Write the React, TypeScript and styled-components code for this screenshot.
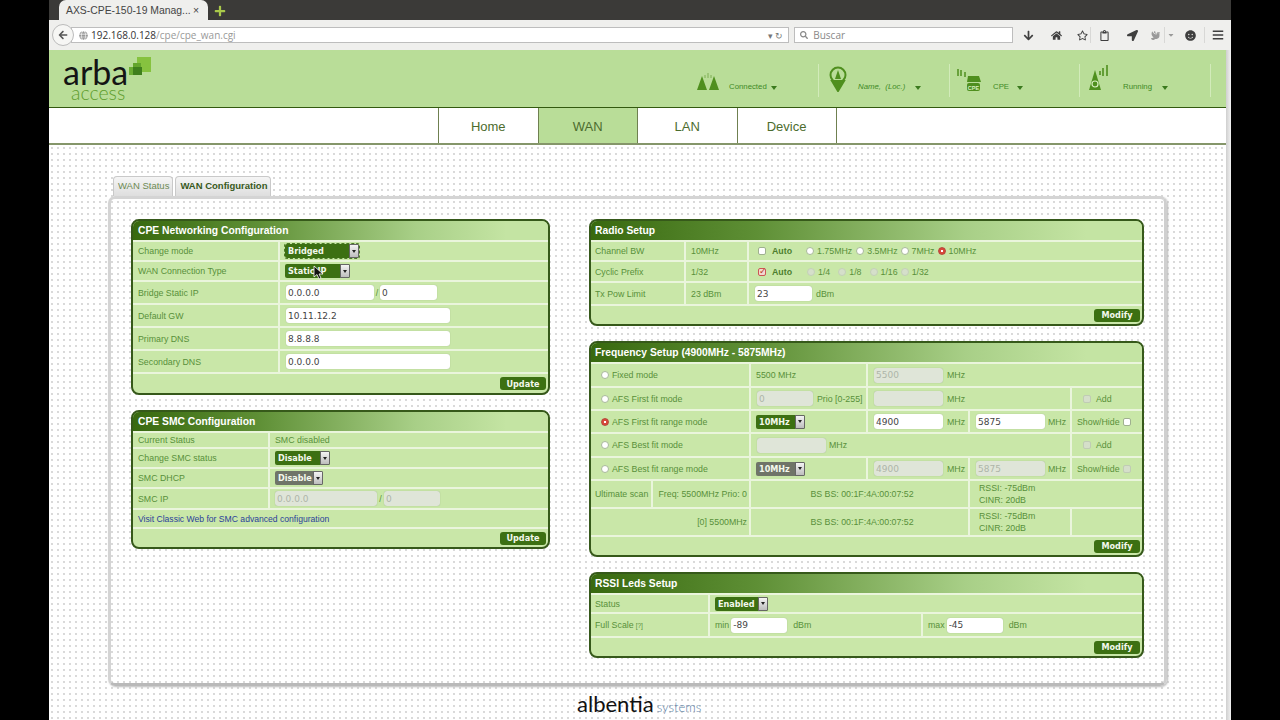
import React from 'react';
import styled, { createGlobalStyle } from 'styled-components';
import { FaArrowDown, FaHome, FaRegStar, FaRegClipboard, FaLocationArrow, FaBars, FaSmile, FaSearch, FaArrowLeft, FaGlobe, FaPlus, FaCaretDown, FaDove } from 'react-icons/fa';

const Global = createGlobalStyle`
  html, body { margin: 0; padding: 0; background: #000; overflow: hidden; }
  * { box-sizing: border-box; }
`;
const Page = styled.div`
  width: 1280px; height: 720px; padding: 0 49px; background: #000; overflow: hidden;
  font-family: "Liberation Sans", Arial, sans-serif;
`;
const Browser = styled.div`width: 1182px; height: 720px; display: flex; flex-direction: column; position: relative;`;
const TabStrip = styled.div`height: 20px; background: #3b3a38; display: flex; align-items: flex-end; padding-left: 10px; flex: none;`;
const BrowserTab = styled.div`
  width: 149px; height: 20px; background: #efefed; border-radius: 7px 7px 0 0; display: flex; align-items: center;
  padding: 0 9px 0 7px; justify-content: space-between; font: 10.4px "Liberation Sans", sans-serif; color: #444; white-space: nowrap;
`;
const Plus = styled.span`margin-left: 6px; height: 19px; display: flex; align-items: center; color: #a9c94a; font-size: 12px;`;
const Toolbar = styled.div`height: 30px; background: #efefed; display: flex; align-items: center; padding: 0 0 0 3px; flex: none; position: relative;`;
const BackBtn = styled.span`
  width: 22px; height: 22px; border-radius: 50%; background: #f6f6f4; border: 1px solid #bbb; color: #555; display: flex;
  align-items: center; justify-content: center; font-size: 10px; flex: none; position: relative; z-index: 1;
`;
const UrlBar = styled.div`
  width: 719px; height: 16px; margin-left: -3px; background: #fff; border: 1px solid #bdbdbd; display: flex; align-items: center;
  padding: 0 5px 0 7px; font: 10px "Open Sans", sans-serif; color: #999; gap: 3px;
`;
const UrlHost = styled.span`color: #333;`;
const UrlEnd = styled.span`margin-left: auto; color: #777; font-size: 9px;`;
const SearchBar = styled.div`
  width: 219px; height: 16px; margin-left: 5px; background: #fff; border: 1px solid #bdbdbd; display: flex; align-items: center;
  padding: 0 5px; gap: 5px; font: 10px "Open Sans", sans-serif; color: #888;
`;
const ToolIcons = styled.div`display: flex; align-items: center; margin-left: 5px; flex: 1; color: #3f3f3f; font-size: 11px;`;
const IconSlot = styled.span<{ $w: number; $sep?: boolean; $muted?: boolean; $size?: number }>`
  width: ${p => p.$w}px; height: 16px; display: flex; align-items: center; justify-content: center; flex: none;
  color: ${p => (p.$muted ? '#9a9a9a' : 'inherit')}; font-size: ${p => p.$size ?? 11}px;
  ${p => (p.$sep ? 'border-left: 1px solid #d8d8d6;' : '')}
`;

const View = styled.div`flex: 1; display: flex; min-height: 0;`;
const Main = styled.div`width: 1177px; display: flex; flex-direction: column; background: #fff;`;
const Scrollbar = styled.div`flex: 1; background: linear-gradient(to right, #cfcfcf, #f2f2f2);`;
const Header = styled.div`
  height: 58px; background: #b9dd98; border-bottom: 1px solid #33590f; display: flex; padding-left: 14px; flex: none;
`;
const Logo = styled.div`width: 90px; position: relative; padding-top: 7px;`;
const LogoArba = styled.div`font: 400 34px/30px Lato, sans-serif; color: #141414;`;
const LogoAccess = styled.div`font: 300 19.5px/12px Lato, sans-serif; color: #5d9c2c; padding-left: 8px;`;
const LogoMark = styled.svg`position: absolute; left: 66px; top: 6px;`;
const Status = styled.div`display: flex; margin-left: auto; margin-right: 15px; padding-top: 14px;`;
const StatusItem = styled.div<{ $w: number; $pl: number }>`
  width: ${p => p.$w}px; height: 33px; padding-left: ${p => p.$pl}px; border-right: 1px solid #d2ebba; display: flex; align-items: flex-end;
  position: relative; padding-bottom: 5px;
`;
const StatusText = styled.span<{ $ml: number; $italic?: boolean }>`
  margin-left: ${p => p.$ml}px; font-size: 7.8px; line-height: 10px; color: #3f8a26; font-style: ${p => (p.$italic ? 'italic' : 'normal')};
`;
const Caret = styled.span<{ $ml: number }>`
  margin-left: ${p => p.$ml}px; margin-bottom: 2px; border-left: 3.5px solid transparent; border-right: 3.5px solid transparent; border-top: 4px solid #3b7a1e;
`;
const Nav = styled.div`
  height: 37px; border-bottom: 2px solid #85966a; display: flex; padding-left: 389px; flex: none; background: #fff;
`;
const NavItem = styled.div<{ $active?: boolean }>`
  width: 99.5px; border-left: 1px solid #6f8050; display: flex; align-items: center; justify-content: center; font-size: 13px; color: #4c6c2e;
  padding-top: 2px;
  background: ${p => (p.$active ? '#b9dd98' : '#fff')};
  &:last-child { border-right: 1px solid #6f8050; width: 100px; }
`;
const Body = styled.div`
  flex: 1; padding: 31px 0 0 59px;
  background-color: #fff;
  background-image: radial-gradient(circle, #d9d9d9 0.7px, transparent 1px);
  background-size: 6px 6px;
`;
const Tabs = styled.div`display: flex; gap: 2px; padding-left: 5px; height: 20px;`;
const TabBtn = styled.div<{ $active?: boolean }>`
  height: 20px; padding: 0 3px 2px 4px; border: 1px solid #c9c9c9; border-bottom: none; border-radius: 4px 4px 0 0; display: flex; align-items: center;
  font-size: 9.5px; color: ${p => (p.$active ? '#38591c' : '#6d8a55')}; font-weight: ${p => (p.$active ? 700 : 400)};
  background: linear-gradient(#f5f5f5, #dedede);
`;
const Panel = styled.div`
  width: 1059px; height: 490px; border: 3px solid #d4d4d4; border-right-color: #cfcfcf; border-bottom-color: #b9b9b9; border-radius: 7px;
  padding: 20px 20px 0; display: flex; justify-content: space-between; align-items: flex-start;
  box-shadow: 1px 1px 2px #bbb;
`;
const Column = styled.div<{ $w: number }>`width: ${p => p.$w}px; display: flex; flex-direction: column; gap: 15px;`;
const Box = styled.section`border: 2px solid #36591a; border-radius: 8px; background: #c9e7a8; overflow: hidden;`;
const Title = styled.h3<{ $pl?: number }>`
  margin: 0; height: 19px; padding-left: ${p => p.$pl ?? 5}px; display: flex; align-items: center; font-size: 10.3px; font-weight: 700; color: #fff;
  background: linear-gradient(to right, #38690f 0%, #5e8f35 30%, #a8cf87 68%, #c4e4a3 90%);
`;
const Row = styled.div<{ $h: number }>`height: ${p => p.$h}px; display: flex; border-top: 2px solid #eaf5dc; font-size: 8.8px; color: #58903a;`;
const Cell = styled.div<{ $w?: number; $align?: string; $pl?: number; $pr?: number; $gap?: number }>`
  ${p => (p.$w ? `width: ${p.$w}px; flex: none; border-right: 2px solid #eaf5dc;` : 'flex: 1;')}
  display: flex; align-items: center; justify-content: ${p => p.$align || 'flex-start'};
  padding: 0 ${p => p.$pr ?? 0}px 0 ${p => p.$pl ?? 5}px; gap: ${p => p.$gap ?? 0}px; min-width: 0; white-space: nowrap; position: relative;
`;
const Foot = styled(Row)`justify-content: flex-end; align-items: center; padding-right: 2px;`;
const Btn = styled.button`
  height: 13px; width: 46px; border: 0; border-radius: 3px; background: #3c7012; color: #f3f8ec; font: 700 9px "DejaVu Sans Condensed", "Open Sans", sans-serif; padding: 0; display: flex; align-items: center; justify-content: center;
`;
const Field = styled.input<{ $w: number; $off?: boolean }>`
  width: ${p => p.$w}px; height: 15px; border: 0; border-radius: 3px; padding: 0 2px; outline: 0; font: 9px "DejaVu Sans", sans-serif;
  color: ${p => (p.$off ? '#aeb5a8' : '#444')}; background: ${p => (p.$off ? '#dfe5d8' : '#fff')}; box-shadow: 0 0 1px #8fa67c; flex: none;
`;
const Select = styled.div<{ $w: number; $off?: boolean; $focus?: boolean }>`
  width: ${p => p.$w}px; height: 14px; border-radius: 2px; background: ${p => (p.$off ? '#6f7468' : '#3c7012')}; color: #f3f8ec; flex: none;
  font: 700 9px "DejaVu Sans Condensed", "Open Sans", sans-serif; display: flex; align-items: center; justify-content: space-between; padding-left: 3px; overflow: hidden;
  ${p => (p.$focus ? 'outline: 1px dashed #4b7a26;' : '')}
`;
const Arrow = styled.span`
  width: 10px; height: 14px; background: linear-gradient(#f4f4f4, #bdbdbd); border: 1px solid #666; display: flex; align-items: center; justify-content: center; flex: none; position: relative;
  &::after { content: ''; border-left: 2px solid transparent; border-right: 2px solid transparent; border-top: 3px solid #222; }
`;
const Check = styled.input<{ $ml?: number }>`
  appearance: none; width: 8px; height: 8px; margin: 0 0 0 ${p => p.$ml ?? 0}px; border: 1px solid #9fb08f; border-radius: 2px; background: #fff; flex: none;
  position: relative;
  &:disabled { background: #d5dfca; border-color: #c0ccb4; }
  &:checked { background: #f2d9cf; border-color: #c55; }
  &:checked::after { content: '✓'; position: absolute; left: 0; top: -3px; font: 700 9px "DejaVu Sans"; color: #c0392b; }
`;
const Radio = styled.input<{ $ml?: number }>`
  appearance: none; width: 8px; height: 8px; margin: 0 ${3}px 0 ${p => p.$ml ?? 0}px; border: 1px solid #a8b89a; border-radius: 50%; background: #fff; flex: none;
  &:disabled { background: #d5dfca; border-color: #c4d0b8; }
  &:checked { background: radial-gradient(circle, #fff 0 1px, #d9483b 1.5px); border-color: #b5473a; }
`;
const Bold = styled.b<{ $ml?: number }>`margin-left: ${p => p.$ml ?? 0}px; color: #4d7f2f;`;
const Gap = styled.span<{ $w: number }>`width: ${p => p.$w}px; flex: none; text-align: center;`;
const Link = styled.a`color: #2a3f9a; font-size: 8.6px;`;
const Tiny = styled.span`font-size: 6.5px; margin-left: 2px;`;
const Stack = styled.div`display: flex; flex-direction: column; line-height: 12px;`;
const CursorMark = styled.svg`position: absolute; left: 33px; top: 3px;`;
const FootBrand = styled.div`display: flex; align-items: baseline; padding: 6px 0 0 469px; height: 34px;`;
const Albentia = styled.span`font: 400 22px/24px Lato, sans-serif; color: #111;`;
const Systems = styled.span`font: 300 13px Lato, sans-serif; color: #5b7fa6; margin-left: 3px;`;

const v = (x: string) => ({ defaultValue: x, readOnly: true });

export default function App() {
  return (
    <Page>
      <Global />
      <Browser>
        <TabStrip>
          <BrowserTab><span>AXS-CPE-150-19 Manag...</span><span>×</span></BrowserTab>
          <Plus><FaPlus /></Plus>
        </TabStrip>
        <Toolbar>
          <BackBtn><FaArrowLeft /></BackBtn>
          <UrlBar>
            <FaGlobe color="#999" size={9} />
            <span><UrlHost>192.168.0.128</UrlHost>/cpe/cpe_wan.cgi</span>
            <UrlEnd>▾ ↻</UrlEnd>
          </UrlBar>
          <SearchBar><FaSearch size={8} />Buscar</SearchBar>
          <ToolIcons>
            <IconSlot $w={20}><FaArrowDown /></IconSlot>
            <IconSlot $w={36}><FaHome /></IconSlot>
            <IconSlot $w={16}><FaRegStar /></IconSlot>
            <IconSlot $w={28} $sep><FaRegClipboard /></IconSlot>
            <IconSlot $w={28}><FaLocationArrow /></IconSlot>
            <IconSlot $w={18} $muted $size={9}><FaDove /></IconSlot>
            <IconSlot $w={12} $sep $muted $size={8}><FaCaretDown /></IconSlot>
            <IconSlot $w={28}><FaSmile /></IconSlot>
            <IconSlot $w={27} $sep $size={12}><FaBars /></IconSlot>
          </ToolIcons>
        </Toolbar>
        <View>
          <Main>
            <Header>
              <Logo>
                <LogoArba>arba</LogoArba>
                <LogoAccess>access</LogoAccess>
                <LogoMark width="24" height="24" viewBox="0 0 24 24">
                  <rect x="8" y="1" width="14" height="15" fill="#86c23f" />
                  <rect x="0" y="11" width="6" height="8" fill="#6bad33" />
                  <rect x="4" y="7" width="8" height="9" fill="#63a52d" />
                  <rect x="4" y="11" width="9" height="8" fill="#3f7f1d" />
                </LogoMark>
              </Logo>
              <Status>
                <StatusItem $w={137} $pl={14}>
                  <svg width="25" height="20" viewBox="0 0 25 20" fill="#4f8f1e">
                    <path d="M6 4 L11 18 H1Z M18 4 L23 18 H13Z" />
                    <path d="M9 3v3M12 1v5M15 3v3" stroke="#7fae55" strokeWidth="1" />
                  </svg>
                  <StatusText $ml={8}>Connected</StatusText>
                  <Caret $ml={4} />
                </StatusItem>
                <StatusItem $w={131} $pl={10}>
                  <svg width="18" height="26" viewBox="0 0 18 26" fill="none" stroke="#4f8f1e" strokeWidth="2">
                    <circle cx="9" cy="9" r="7.5" />
                    <path d="M3 15 L9 25 L15 15Z" fill="#4f8f1e" />
                    <path d="M9 4 L12 13 H6Z" fill="#4f8f1e" stroke="none" />
                  </svg>
                  <StatusText $ml={11} $italic>Name,&nbsp; (Loc.)</StatusText>
                  <Caret $ml={10} />
                </StatusItem>
                <StatusItem $w={130} $pl={7}>
                  <svg width="24" height="26" viewBox="0 0 24 26" fill="#4f8f1e">
                    <path d="M1 3v7M4 4v6M8 6v5" stroke="#4f8f1e" strokeWidth="1.5" />
                    <path d="M11 10h11l2 6H10Z" />
                    <rect x="10" y="17" width="13" height="8" rx="2" />
                    <text x="16.5" y="23.5" textAnchor="middle" fontSize="5.5" fontWeight="700" fill="#d8efc0" fontFamily="Liberation Sans">CPE</text>
                  </svg>
                  <StatusText $ml={12}>CPE</StatusText>
                  <Caret $ml={8} />
                </StatusItem>
                <StatusItem $w={131} $pl={9}>
                  <svg width="20" height="28" viewBox="0 0 20 28" fill="#4f8f1e">
                    <path d="M6 6 L12 26 H0Z" />
                    <circle cx="6" cy="20" r="3" fill="none" stroke="#d8efc0" strokeWidth="1.2" />
                    <path d="M11 7v4M14 4v8M18 1v11" stroke="#4f8f1e" strokeWidth="1.6" />
                  </svg>
                  <StatusText $ml={14}>Running</StatusText>
                  <Caret $ml={10} />
                </StatusItem>
              </Status>
            </Header>
            <Nav>
              <NavItem>Home</NavItem>
              <NavItem $active>WAN</NavItem>
              <NavItem>LAN</NavItem>
              <NavItem>Device</NavItem>
            </Nav>
            <Body>
              <Tabs>
                <TabBtn>WAN Status</TabBtn>
                <TabBtn $active>WAN Configuration</TabBtn>
              </Tabs>
              <Panel>
                <Column $w={419}>
                  <Box>
                    <Title>CPE Networking Configuration</Title>
                    <Row $h={20}><Cell $w={147}>Change mode</Cell><Cell $pl={5}><Select $w={74} $focus>Bridged<Arrow /></Select></Cell></Row>
                    <Row $h={20}><Cell $w={147}>WAN Connection Type</Cell>
                      <Cell $pl={5}><Select $w={65}>Static IP<Arrow /></Select>
                        <CursorMark width="11" height="15" viewBox="0 0 11 15"><path d="M1 1v11l3-2.5 2 4.5 2-1-2-4h4Z" fill="#111" stroke="#fff" strokeWidth=".8" /></CursorMark>
                      </Cell></Row>
                    <Row $h={23}><Cell $w={147}>Bridge Static IP</Cell><Cell $pl={6}><Field $w={88} {...v('0.0.0.0')} /><Gap $w={6}>/</Gap><Field $w={57} {...v('0')} /></Cell></Row>
                    <Row $h={23}><Cell $w={147}>Default GW</Cell><Cell $pl={6}><Field $w={164} {...v('10.11.12.2')} /></Cell></Row>
                    <Row $h={23}><Cell $w={147}>Primary DNS</Cell><Cell $pl={6}><Field $w={164} {...v('8.8.8.8')} /></Cell></Row>
                    <Row $h={23}><Cell $w={147}>Secondary DNS</Cell><Cell $pl={6}><Field $w={164} {...v('0.0.0.0')} /></Cell></Row>
                    <Foot $h={21}><Btn>Update</Btn></Foot>
                  </Box>
                  <Box>
                    <Title>CPE SMC Configuration</Title>
                    <Row $h={16}><Cell $w={137}>Current Status</Cell><Cell>SMC disabled</Cell></Row>
                    <Row $h={20}><Cell $w={137}>Change SMC status</Cell><Cell><Select $w={55}>Disable<Arrow /></Select></Cell></Row>
                    <Row $h={20}><Cell $w={137}>SMC DHCP</Cell><Cell><Select $w={48} $off>Disable<Arrow /></Select></Cell></Row>
                    <Row $h={21}><Cell $w={137}>SMC IP</Cell><Cell><Field $w={102} $off disabled {...v('0.0.0.0')} /><Gap $w={7}>/</Gap><Field $w={56} $off disabled {...v('0')} /></Cell></Row>
                    <Row $h={19}><Cell><Link>Visit Classic Web for SMC advanced configuration</Link></Cell></Row>
                    <Foot $h={20}><Btn>Update</Btn></Foot>
                  </Box>
                </Column>
                <Column $w={555}>
                  <Box>
                    <Title $pl={4}>Radio Setup</Title>
                    <Row $h={20}><Cell $w={95} $pl={4}>Channel BW</Cell><Cell $w={63}>10MHz</Cell>
                      <Cell $pl={9}><Check type="checkbox" /><Bold $ml={6}>Auto</Bold>
                        <Radio type="radio" $ml={14} />1.75MHz<Radio type="radio" $ml={4} />3.5MHz<Radio type="radio" $ml={3} />7MHz<Radio type="radio" defaultChecked $ml={3} />10MHz
                      </Cell></Row>
                    <Row $h={21}><Cell $w={95} $pl={4}>Cyclic Prefix</Cell><Cell $w={63}>1/32</Cell>
                      <Cell $pl={9}><Check type="checkbox" defaultChecked /><Bold $ml={6}>Auto</Bold>
                        <Radio type="radio" disabled $ml={15} />1/4<Radio type="radio" disabled $ml={8} />1/8<Radio type="radio" disabled $ml={8} />1/16<Radio type="radio" disabled $ml={3} />1/32
                      </Cell></Row>
                    <Row $h={23}><Cell $w={95} $pl={4}>Tx Pow Limit</Cell><Cell $w={63}>23 dBm</Cell><Cell $pl={6} $gap={4}><Field $w={57} {...v('23')} />dBm</Cell></Row>
                    <Foot $h={20}><Btn>Modify</Btn></Foot>
                  </Box>
                  <Box>
                    <Title $pl={4}>Frequency Setup (4900MHz - 5875MHz)</Title>
                    <Row $h={24}><Cell $w={160} $pl={10}><Radio type="radio" />Fixed mode</Cell><Cell $w={117}>5500 MHz</Cell>
                      <Cell $pl={6} $gap={4}><Field $w={69} $off disabled {...v('5500')} />MHz</Cell></Row>
                    <Row $h={23}><Cell $w={160} $pl={10}><Radio type="radio" />AFS First fit mode</Cell>
                      <Cell $w={117} $pl={6} $gap={4}><Field $w={56} $off disabled {...v('0')} />Prio [0-255]</Cell>
                      <Cell $w={204} $pl={6} $gap={4}><Field $w={69} $off disabled />MHz</Cell>
                      <Cell $pl={11} $gap={5}><Check type="checkbox" disabled />Add</Cell></Row>
                    <Row $h={23}><Cell $w={160} $pl={10}><Radio type="radio" defaultChecked />AFS First fit range mode</Cell>
                      <Cell $w={117}><Select $w={49}>10MHz<Arrow /></Select></Cell>
                      <Cell $w={102} $pl={6} $gap={4}><Field $w={69} {...v('4900')} />MHz</Cell>
                      <Cell $w={102} $pl={6} $gap={3}><Field $w={69} {...v('5875')} />MHz</Cell>
                      <Cell $pl={5} $gap={3}>Show/Hide<Check type="checkbox" /></Cell></Row>
                    <Row $h={24}><Cell $w={160} $pl={10}><Radio type="radio" />AFS Best fit mode</Cell>
                      <Cell $w={321} $pl={6} $gap={3}><Field $w={69} $off disabled />MHz</Cell>
                      <Cell $pl={11} $gap={5}><Check type="checkbox" disabled />Add</Cell></Row>
                    <Row $h={23}><Cell $w={160} $pl={10}><Radio type="radio" />AFS Best fit range mode</Cell>
                      <Cell $w={117}><Select $w={49} $off>10MHz<Arrow /></Select></Cell>
                      <Cell $w={102} $pl={6} $gap={4}><Field $w={69} $off disabled {...v('4900')} />MHz</Cell>
                      <Cell $w={102} $pl={6} $gap={3}><Field $w={69} $off disabled {...v('5875')} />MHz</Cell>
                      <Cell $pl={5} $gap={3}>Show/Hide<Check type="checkbox" disabled /></Cell></Row>
                    <Row $h={28}><Cell $w={62} $pl={4}>Ultimate scan</Cell><Cell $w={98} $align="flex-end" $pr={2}>Freq: 5500MHz Prio: 0</Cell>
                      <Cell $w={219} $align="center">BS BS: 00:1F:4A:00:07:52</Cell>
                      <Cell $pl={9}><Stack><span>RSSI: -75dBm</span><span>CINR: 20dB</span></Stack></Cell></Row>
                    <Row $h={28}><Cell $w={160} $align="flex-end" $pr={2}>[0] 5500MHz</Cell>
                      <Cell $w={219} $align="center">BS BS: 00:1F:4A:00:07:52</Cell>
                      <Cell $w={102} $pl={9}><Stack><span>RSSI: -75dBm</span><span>CINR: 20dB</span></Stack></Cell>
                      <Cell />
                    </Row>
                    <Foot $h={20}><Btn>Modify</Btn></Foot>
                  </Box>
                  <Box>
                    <Title $pl={4}>RSSI Leds Setup</Title>
                    <Row $h={19}><Cell $w={119} $pl={4}>Status</Cell><Cell><Select $w={53}>Enabled<Arrow /></Select></Cell></Row>
                    <Row $h={24}><Cell $w={119} $pl={4}>Full Scale<Tiny>[?]</Tiny></Cell>
                      <Cell $w={213} $gap={2}>min<Field $w={56} {...v('-89')} /><Gap $w={2} />dBm</Cell>
                      <Cell $gap={2}>max<Field $w={56} {...v('-45')} /><Gap $w={2} />dBm</Cell></Row>
                    <Foot $h={20}><Btn>Modify</Btn></Foot>
                  </Box>
                </Column>
              </Panel>
              <FootBrand><Albentia>albentia</Albentia><Systems>systems</Systems></FootBrand>
            </Body>
          </Main>
          <Scrollbar />
        </View>
      </Browser>
    </Page>
  );
}
